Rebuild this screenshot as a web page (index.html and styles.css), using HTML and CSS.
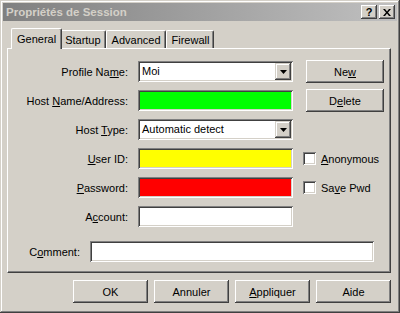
FILE: index.html
```html
<!DOCTYPE html>
<html lang="fr">
<head>
<meta charset="utf-8">
<title>Propriétés de Session</title>
<link rel="stylesheet" href="styles.css">
</head>
<body>
<div class="window">
  <div class="titlebar">
    <span class="title">Propriétés de Session</span>
    <div class="tb-buttons">
      <span class="tb-btn help">?</span>
      <span class="tb-btn close"><svg width="8" height="7" viewBox="0 0 8 7"><path d="M0 0h2l2 2.5L6 0h2L5 3.5 8 7H6L4 4.5 2 7H0l3-3.5z" fill="#000"/></svg></span>
    </div>
  </div>
  <div class="body">
    <div class="tabs">
      <div class="tab active">General</div>
      <div class="tab">Startup</div>
      <div class="tab">Advanced</div>
      <div class="tab">Firewall</div>
    </div>
    <div class="panel">
      <div class="form">
        <label class="lbl">Profile Na<u>m</u>e:</label>
        <div class="field combo"><span class="val">Moi</span><span class="drop"><svg width="7" height="4" viewBox="0 0 7 4"><path d="M0 0h7L3.5 4z" fill="#000"/></svg></span></div>
        <button class="btn side first">Ne<u>w</u></button>

        <label class="lbl">Host <u>N</u>ame/Address:</label>
        <div class="field green"></div>
        <button class="btn side">D<u>e</u>lete</button>

        <label class="lbl">Host <u>T</u>ype:</label>
        <div class="field combo"><span class="val">Automatic detect</span><span class="drop"><svg width="7" height="4" viewBox="0 0 7 4"><path d="M0 0h7L3.5 4z" fill="#000"/></svg></span></div>
        <span></span>

        <label class="lbl"><u>U</u>ser ID:</label>
        <div class="field yellow"></div>
        <label class="check"><span class="box"></span><span><u>A</u>nonymous</span></label>

        <label class="lbl"><u>P</u>assword:</label>
        <div class="field red"></div>
        <label class="check"><span class="box"></span><span>Sa<u>v</u>e Pwd</span></label>

        <label class="lbl">A<u>c</u>count:</label>
        <div class="field"></div>
        <span></span>
      </div>
      <div class="comment-row">
        <label class="lbl">C<u>o</u>mment:</label>
        <div class="field wide"></div>
      </div>
    </div>
    <div class="actions">
      <button class="btn act">OK</button>
      <button class="btn act">Annuler</button>
      <button class="btn act"><u>A</u>ppliquer</button>
      <button class="btn act">Aide</button>
    </div>
  </div>
</div>
</body>
</html>
```
FILE: styles.css
```css
html, body {
  margin: 0;
  padding: 0;
  background: #d4d0c8;
}
body {
  font-family: "Liberation Sans", Arial, sans-serif;
  font-size: 11px;
  color: #000;
}
.window {
  width: 400px;
  height: 313px;
  box-sizing: border-box;
  padding: 3px;
  background: #d4d0c8;
  box-shadow: inset -1px -1px #404040, inset 1px 1px #d4d0c8, inset -2px -2px #808080, inset 2px 2px #fff;
  display: flex;
  flex-direction: column;
}
.titlebar {
  height: 18px;
  flex: none;
  background: linear-gradient(to right, #808080, #c0c0c0);
  display: flex;
  align-items: center;
  justify-content: space-between;
  padding: 0 2px 0 2px;
}
.title {
  color: #d4d0c8;
  font-weight: bold;
  font-size: 11.5px;
  padding-left: 1px;
}
.tb-buttons {
  display: flex;
  gap: 2px;
}
.tb-btn {
  width: 16px;
  height: 14px;
  box-sizing: border-box;
  background: #d4d0c8;
  box-shadow: inset -1px -1px #404040, inset 1px 1px #fff, inset -2px -2px #808080, inset 2px 2px #d4d0c8;
  display: flex;
  align-items: center;
  justify-content: center;
  font-weight: bold;
  font-size: 11px;
  line-height: 14px;
}
.body {
  flex: 1;
  display: flex;
  flex-direction: column;
  padding: 7px 6px 0 4px;
}
.tabs {
  height: 20px;
  display: flex;
  align-items: flex-end;
  padding-left: 6px;
  flex: none;
}
.tab {
  height: 18px;
  box-sizing: border-box;
  padding: 2px 4px 0 5px;
  border-left: 1px solid #fff;
  border-top: 1px solid #fff;
  border-right: 1px solid #404040;
  box-shadow: inset -1px 0 #808080;
  border-radius: 2px 2px 0 0;
  line-height: 14px;
  white-space: nowrap;
}
.tab.active {
  height: 21px;
  margin-bottom: -1px;
  padding: 3px 5px 0 5px;
  background: #d4d0c8;
  position: relative;
  z-index: 1;
  margin-left: -2px;
  margin-right: -2px;
}
.tab.active + .tab {
  border-left: none;
}
.panel {
  height: 225px;
  box-sizing: border-box;
  flex: none;
  border-left: 1px solid #fff;
  border-top: 1px solid #fff;
  border-right: 1px solid #404040;
  border-bottom: 1px solid #404040;
  box-shadow: inset -1px -1px #808080;
  padding-top: 12px;
}
.form {
  display: grid;
  grid-template-columns: 120px 155px auto;
  grid-auto-rows: 21px;
  column-gap: 10px;
  row-gap: 8px;
  align-items: center;
}
.lbl {
  text-align: right;
  white-space: nowrap;
}
.field {
  height: 21px;
  box-sizing: border-box;
  background: #fff;
  box-shadow: inset 1px 1px #808080, inset -1px -1px #fff, inset 2px 2px #404040, inset -2px -2px #d4d0c8;
}
.field.green { background: #00ff00; }
.field.yellow { background: #ffff00; }
.field.red { background: #ff0000; }
.combo {
  display: flex;
  align-items: center;
  justify-content: space-between;
  padding: 2px;
}
.combo .val {
  padding-left: 2px;
  line-height: 17px;
}
.drop {
  width: 16px;
  height: 17px;
  box-sizing: border-box;
  background: #d4d0c8;
  box-shadow: inset -1px -1px #404040, inset 1px 1px #d4d0c8, inset -2px -2px #808080, inset 2px 2px #fff;
  display: flex;
  align-items: center;
  justify-content: center;
}
.btn {
  font-family: inherit;
  font-size: 11px;
  color: #000;
  background: #d4d0c8;
  border: none;
  padding: 0;
  margin: 0;
  box-sizing: border-box;
  box-shadow: inset -1px -1px #404040, inset 1px 1px #fff, inset -2px -2px #808080, inset 2px 2px #d4d0c8;
}
.btn.side {
  width: 78px;
  height: 23px;
  margin-left: 3px;
  justify-self: start;
}
.check {
  display: flex;
  align-items: center;
  gap: 5px;
}
.box {
  width: 13px;
  height: 13px;
  box-sizing: border-box;
  background: #fff;
  box-shadow: inset 1px 1px #808080, inset -1px -1px #fff, inset 2px 2px #404040, inset -2px -2px #d4d0c8;
}
.comment-row {
  margin-top: 14px;
  display: grid;
  grid-template-columns: 72px 284px;
  column-gap: 10px;
  align-items: center;
}
.actions {
  margin-top: 7px;
  display: flex;
  justify-content: flex-end;
  gap: 6px;
}
.btn.act {
  width: 75px;
  height: 23px;
}
```
